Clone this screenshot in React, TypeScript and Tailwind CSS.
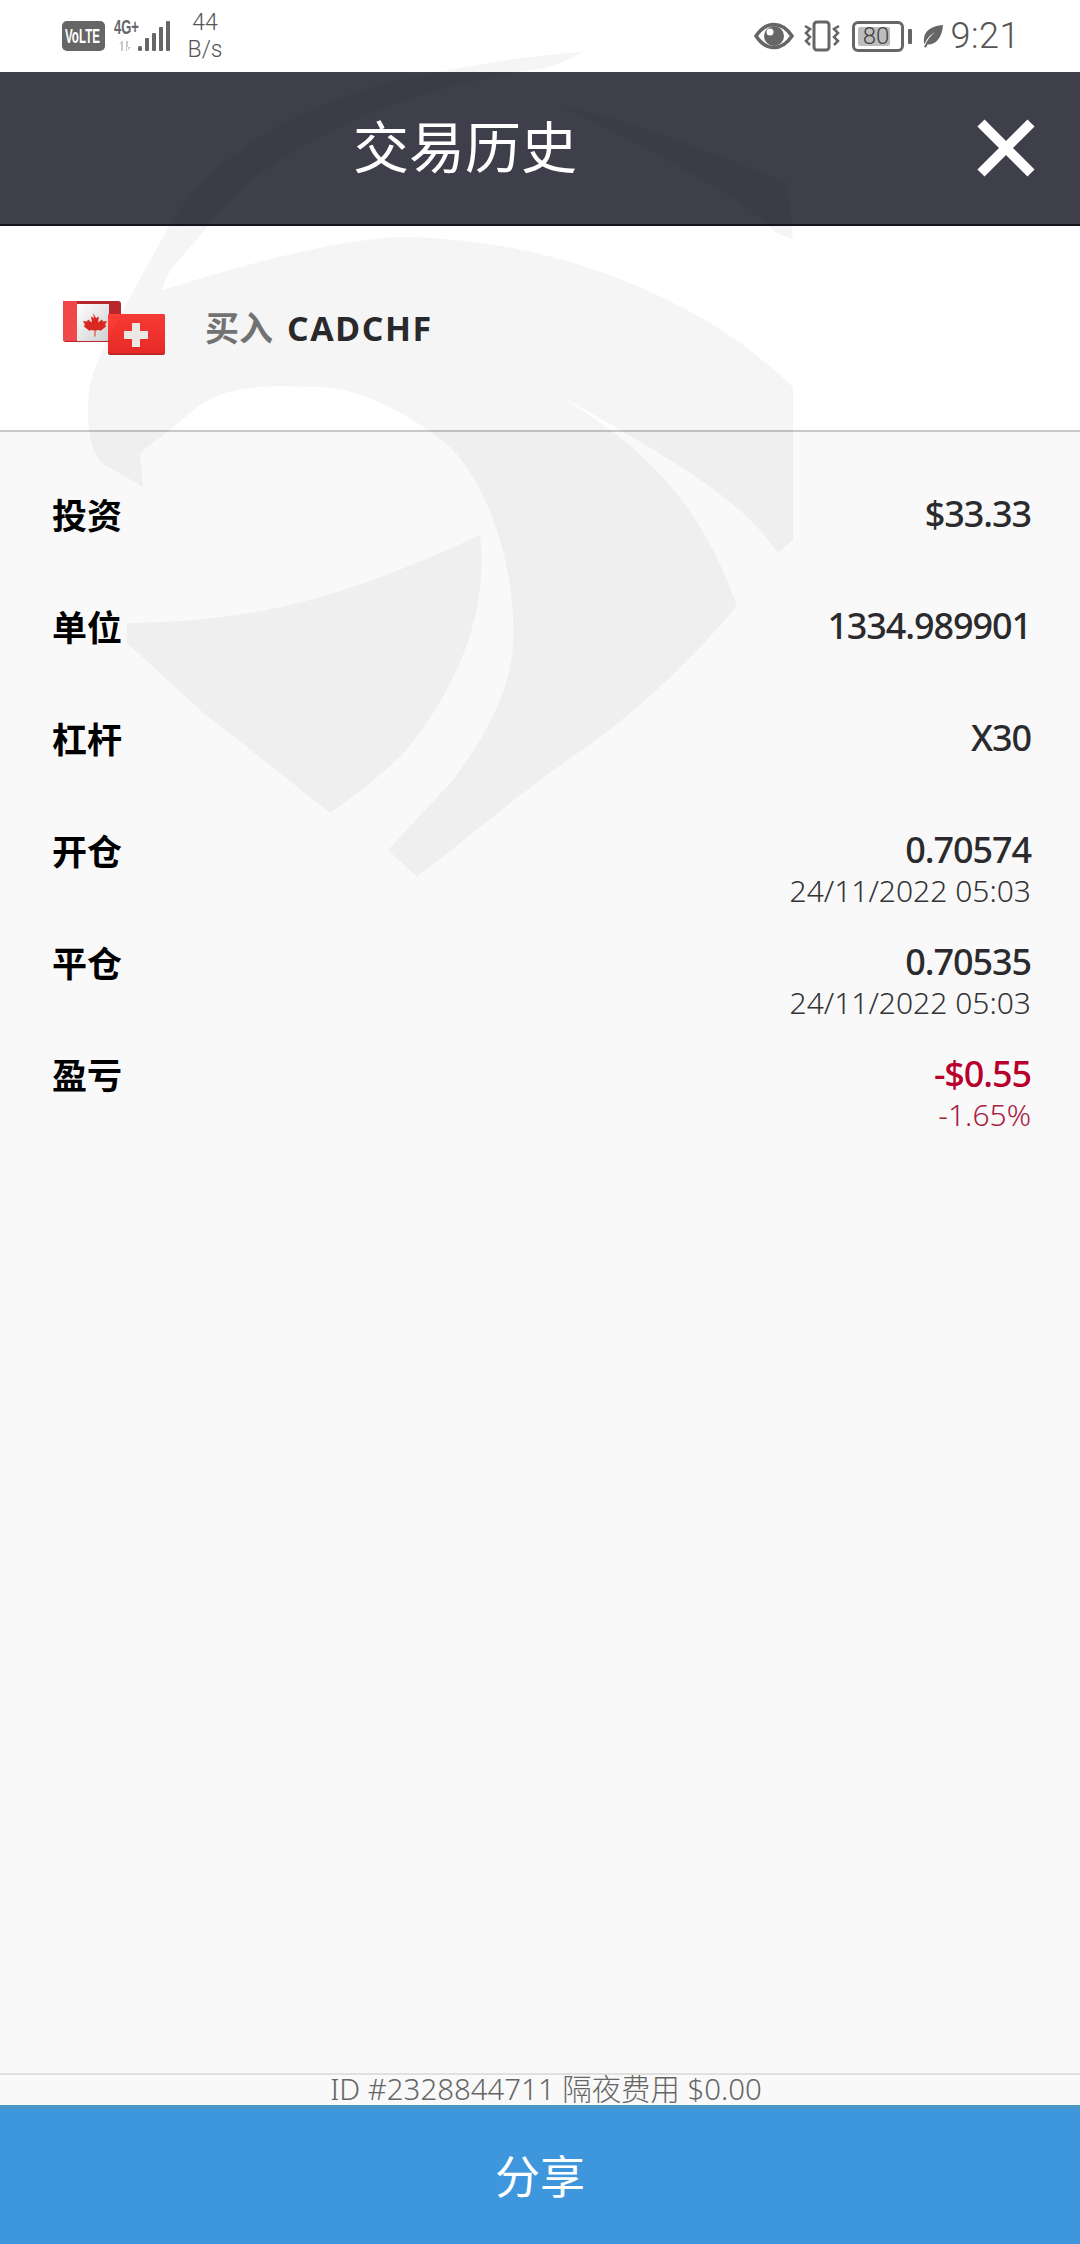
import React from "react";

const cjk = "font-['Noto_Sans','Noto_Sans_CJK_SC',sans-serif]";

function Row({ label, value, sub, red }: { label: string; value: string; sub?: string; red?: boolean }) {
  return (
    <div className="flex h-[112px] justify-between pl-[52px] pr-[49px]">
      <div className="mt-[21px] text-[35px] leading-[46px] font-bold text-black">{label}</div>
      <div className="mt-[21px] flex flex-col items-end">
        <div className={`text-[36px] leading-[42px] font-medium tracking-[-1.1px] ${red ? "text-[#b8002c]" : "text-[#2b2b2e]"}`}>{value}</div>
        {sub && <div className={`text-[30px] leading-[40px] font-light ${red ? "text-[#a8213f]" : "text-[#333336]"}`}>{sub}</div>}
      </div>
    </div>
  );
}

function Watermark() {
  return (
    <svg className="pointer-events-none absolute left-0 top-0" width="1080" height="900" viewBox="0 0 1080 900" fill="#000" fillOpacity="0.04">
      <path d="M127 623 C250 622 340 600 480 535 C490 620 450 700 400 757 C375 780 350 800 330 813 L200 710 L127 643 Z" />
      <path d="M143 487 L100 462 C85 440 85 400 93 373 C105 340 130 297 167 230 L207 227 C185 255 165 270 163 290 C227 270 327 240 400 237 C517 238 617 270 700 317 C740 340 770 365 793 387 L793 540 L778 553 C740 500 693 470 537 383 C640 440 700 500 737 606 C700 650 650 700 600 737 C560 765 520 795 493 817 L417 877 L388 850 L453 780 C490 730 515 680 513 633 C515 570 490 490 453 450 C420 420 360 385 313 387 C270 385 230 385 200 405 L170 430 L140 453 Z" />
      <path d="M167 230 C210 150 320 90 450 70 C500 60 540 55 583 52 C560 65 540 70 530 70 C400 90 260 150 207 227 Z" />
      <path d="M560 105 C650 125 740 165 787 183 L793 240 L775 232 C740 195 650 150 560 105 Z" />
    </svg>
  );
}

function Flags() {
  return (
    <svg width="104" height="56" viewBox="0 0 104 56" className="shrink-0">
      <defs>
        <linearGradient id="ca" x1="0" y1="0" x2="1" y2="1">
          <stop offset="0" stopColor="#ffffff" />
          <stop offset="1" stopColor="#cfcfd2" />
        </linearGradient>
        <linearGradient id="ch" x1="0" y1="0" x2="0" y2="1">
          <stop offset="0" stopColor="#ff3e38" />
          <stop offset="1" stopColor="#f22c29" />
        </linearGradient>
      </defs>
      <rect x="1" y="1" width="58" height="41" rx="3" fill="#b8272c" />
      <rect x="1" y="1" width="14" height="40" fill="#f0474b" />
      <rect x="15" y="4" width="32" height="37" fill="url(#ca)" />
      <path d="M31 13 l3 5 3-1.500-1 6 4-3 1 2 4-.500-2 4 1.500 1-6 5-1-1-4 .500 0 6-1 0 0-6-4-.500-1 1-6-5 1.500-1-2-4 4 .500 1-2 4 3-1-6 3 1.500z" fill="#d8281f" />
      <rect x="46" y="14" width="57" height="41" rx="2" fill="#c92825" />
      <rect x="46" y="14" width="57" height="39" rx="2" fill="url(#ch)" />
      <path d="M71 24 h8 v8 h8 v8 h-8 v8 h-8 v-8 h-8 v-8 h8z" fill="#f5f1ef" transform="translate(-1 -1)" />
    </svg>
  );
}

function StatusLeft() {
  return (
    <div className="flex items-center">
      <div className="flex h-[30px] w-[43px] items-center justify-center rounded-[5px] bg-[#666]">
        <svg width="38" height="22" viewBox="0 0 38 22">
          <text transform="translate(0 18) scale(0.58 1)" fill="#fff" fontSize="20" fontWeight="700" fontFamily="'Liberation Sans',sans-serif">VoLTE</text>
        </svg>
      </div>
      <svg width="60" height="38" viewBox="0 -4 60 38" className="ml-[9px] -mt-[4px] text-[#666]" fill="currentColor">
        <text transform="translate(0 15) scale(0.65 1)" fontSize="20" fontWeight="700" fontFamily="'Liberation Sans',sans-serif">4G+</text>
        <path d="M7 22 h2 v10 h-2 z M5 25 l3-3 0 3z M12 22 h2 v10 h-2z M13 32 l4-4 h-4z" opacity="0.35" />
        <rect x="24" y="27" width="4" height="5" rx="1.500" />
        <rect x="31" y="19" width="4" height="13" rx="1" />
        <rect x="38" y="14" width="4" height="18" rx="1" />
        <rect x="45" y="8" width="4" height="24" rx="1" />
        <rect x="52" y="2" width="4" height="30" rx="1" />
      </svg>
      <div className="ml-[13px] flex w-[36px] flex-col items-center font-['Roboto',sans-serif] text-[23px] leading-[27px] font-light text-[#555]">
        <span>44</span>
        <span>B/s</span>
      </div>
    </div>
  );
}

function StatusRight() {
  return (
    <div className="flex items-center text-[#666]">
      <svg width="40" height="28" viewBox="0 0 40 28">
        <path d="M2 14 C8 5 14 2.500 20 2.500 C26 2.500 32 5 38 14 C32 23 26 25.500 20 25.500 C14 25.500 8 23 2 14 Z" fill="none" stroke="currentColor" strokeWidth="3.500" />
        <circle cx="20" cy="14" r="10" fill="currentColor" />
        <circle cx="16" cy="10" r="3.500" fill="#fff" />
      </svg>
      <svg width="40" height="32" viewBox="0 0 40 32" className="ml-[9px]" fill="none" stroke="currentColor">
        <rect x="11" y="2" width="15" height="28" rx="3" strokeWidth="3" />
        <path d="M2 6 l5 3-4 4 4 4-4 4 4 4" strokeWidth="2.500" />
        <path d="M36 6 l-5 3 4 4-4 4 4 4-4 4" strokeWidth="2.500" />
      </svg>
      <div className="relative ml-[9px] h-[31px] w-[52px] rounded-[6px] border-[3px] border-[#666]">
        <div className="absolute bottom-[3px] left-[3px] top-[3px] w-[32px] rounded-[2px] bg-[#bdbdbd]" />
        <span className="absolute inset-0 flex items-center justify-center pr-[3px] font-['Roboto',sans-serif] text-[24px] leading-none font-light text-[#444]">80</span>
      </div>
      <div className="ml-[4px] h-[15px] w-[4px] rounded-[1px] bg-[#666]" />
      <svg width="22" height="24" viewBox="0 0 22 24" className="ml-[10px]" fill="currentColor">
        <path d="M21 1 C10 2 3 6 2 14 C1.500 17 2 19 2.500 20 C5 14 9 10 13 8 C9 11 5 16 2 23 L4 23.500 L5.500 20.500 C13 21 20 15 21 1 Z" />
      </svg>
      <span className="ml-[7px] font-['Roboto',sans-serif] text-[36px] leading-none font-light tracking-[0.5px] text-[#555]">9:21</span>
    </div>
  );
}

export default function App() {
  return (
    <div className={`relative flex h-[2244px] w-[1080px] flex-col overflow-hidden bg-[#f9f9f9] ${cjk}`}>
      <div className="flex h-[72px] shrink-0 items-center justify-between bg-white pl-[62px] pr-[60px]">
        <StatusLeft />
        <StatusRight />
      </div>

      <div className="relative flex h-[154px] shrink-0 items-center border-b-[2px] border-[#15151f] bg-[#3e3f4b] pb-[5px] pl-[353px]">
        <span className="text-[56px] leading-none text-white">交易历史</span>
        <svg width="58" height="58" viewBox="0 0 58 58" className="ml-auto mr-[45px] mt-[5px]" stroke="#fff" strokeWidth="10" fill="none">
          <path d="M4 4 L54 54 M54 4 L4 54" />
        </svg>
      </div>

      <div className="flex h-[206px] shrink-0 items-center border-b-[2px] border-[#c8c8c8] bg-white pl-[62px]">
        <Flags />
        <span className="ml-[39px] text-[34px] leading-none font-bold text-[#777]">买入</span>
        <span className="ml-[14px] font-['Open_Sans',sans-serif] text-[34px] leading-none font-bold tracking-[1.5px] text-[#2b2b2e]">CADCHF</span>
      </div>

      <div className="flex-1 pt-[40px]">
        <Row label="投资" value="$33.33" />
        <Row label="单位" value="1334.989901" />
        <Row label="杠杆" value="X30" />
        <Row label="开仓" value="0.70574" sub="24/11/2022 05:03" />
        <Row label="平仓" value="0.70535" sub="24/11/2022 05:03" />
        <Row label="盈亏" value="-$0.55" sub="-1.65%" red />
      </div>

      <div className="flex h-[32px] shrink-0 items-center justify-center border-t-[2px] border-[#e0e0e0] pl-[12px]">
        <span className="text-[29.4px] leading-none font-light text-[#666]">ID #2328844711 隔夜费用 $0.00</span>
      </div>

      <div className="flex h-[139px] shrink-0 items-center justify-center border-t-[4px] border-[#4a97c5] bg-[#3e97dd]">
        <span className="text-[45px] leading-none text-white">分享</span>
      </div>

      <Watermark />
    </div>
  );
}
